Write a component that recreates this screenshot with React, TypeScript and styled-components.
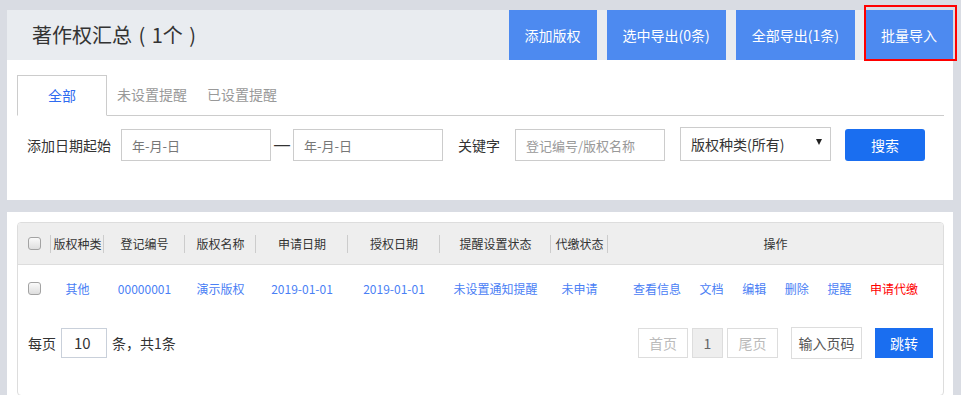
import React from "react";
import styled, { createGlobalStyle } from "styled-components";

const GlobalStyle = createGlobalStyle`
  html, body {
    margin: 0;
    padding: 0;
    background: #d9dce3;
    font-family: "Noto Sans CJK SC", "Noto Sans", sans-serif;
    color: #333;
  }
  * { box-sizing: border-box; }
`;

const Page = styled.div`
  padding: 10px 8px 0 7px;
`;

const TopPanel = styled.section`
  background: #fff;
  padding-bottom: 39px;
`;

const Header = styled.header`
  display: flex;
  align-items: stretch;
  height: 50px;
  background: #e9ecf0;
`;

const Title = styled.h1`
  margin: 0;
  padding-left: 25px;
  font-size: 20px;
  font-weight: normal;
  line-height: 50px;
  word-spacing: 2px;
  color: #333;
`;

const ActionBar = styled.div`
  margin-left: auto;
  display: flex;
  gap: 10px;
`;

const ActionButton = styled.button<{ $highlighted?: boolean }>`
  position: relative;
  height: 50px;
  padding: 0 16px;
  border: none;
  background: #4d8af0;
  color: #fff;
  font-family: inherit;
  font-size: 14px;
  cursor: pointer;
  ${(p) =>
    p.$highlighted &&
    `
    &::after {
      content: "";
      position: absolute;
      top: -5px;
      left: -1px;
      right: -4px;
      bottom: -1px;
      border: 2px solid #f00;
      pointer-events: none;
    }
  `}
`;

const Body = styled.div`
  padding: 15px 9px 0 10px;
`;

const TabBar = styled.div`
  display: flex;
  height: 41px;
  border-bottom: 1px solid #ccc;
`;

const Tab = styled.div<{ $active?: boolean }>`
  height: 41px;
  line-height: 39px;
  font-size: 14px;
  text-align: center;
  ${(p) =>
    p.$active
      ? `
    width: 90px;
    border: 1px solid #ccc;
    border-bottom-color: #fff;
    background: #fff;
    color: #2f6bf0;
  `
      : `
    padding: 0 10px;
    color: #999;
  `}
`;

const FilterRow = styled.div`
  display: flex;
  align-items: center;
  margin-top: 13px;
  padding-left: 10px;
`;

const Label = styled.span<{ $gapLeft?: number }>`
  font-size: 14px;
  color: #333;
  margin-left: ${(p) => p.$gapLeft ?? 0}px;
  margin-right: ${(p) => (p.$gapLeft ? 15 : 10)}px;
`;

const TextInput = styled.input`
  width: 150px;
  height: 32px;
  border: 1px solid #ccc;
  padding: 0 10px;
  font-family: inherit;
  font-size: 13px;
  color: #666;
  outline: none;
  &::placeholder { color: #777; }
`;

const KeywordInput = styled(TextInput)`
  &::placeholder { color: #999; }
`;

const Dash = styled.span`
  margin: 0 3px;
  font-family: "Liberation Sans", sans-serif;
  font-size: 16px;
  color: #333;
`;

const SelectBox = styled.div`
  display: flex;
  align-items: center;
  justify-content: space-between;
  width: 151px;
  height: 34px;
  margin-left: 15px;
  margin-top: -3px;
  padding: 0 8px 0 10px;
  border: 1px solid #ccc;
  font-size: 14px;
  color: #333;
`;

const Caret = styled.span`
  width: 0;
  height: 0;
  border-left: 3.5px solid transparent;
  border-right: 3.5px solid transparent;
  border-top: 6px solid #222;
  margin-top: -4px;
`;

const SearchButton = styled.button`
  width: 80px;
  height: 32px;
  margin-left: 14px;
  border: none;
  border-radius: 3px;
  background: #1a6ef0;
  color: #fff;
  font-family: inherit;
  font-size: 14px;
`;

const BottomPanel = styled.section`
  margin-top: 12px;
  background: #fff;
  padding: 10px 9px 10px 10px;
`;

const TableBox = styled.div`
  border: 1px solid #ddd;
  border-radius: 4px;
  overflow: hidden;
`;

const columns = "33px 53px 81px 71px 92px 92px 111px 57px 1fr";

const HeadRow = styled.div`
  display: grid;
  grid-template-columns: ${columns};
  align-items: center;
  height: 42px;
  background: #eee;
  border-bottom: 1px solid #ddd;
`;

const HeadCell = styled.div<{ $sep?: boolean }>`
  position: relative;
  display: flex;
  align-items: center;
  justify-content: center;
  font-size: 12px;
  color: #333;
  white-space: nowrap;
  ${(p) =>
    p.$sep &&
    `
    &::after {
      content: "";
      position: absolute;
      right: 0;
      top: 50%;
      width: 1px;
      height: 18px;
      margin-top: -9px;
      background: #ccc;
    }
  `}
`;

const DataRow = styled.div`
  display: grid;
  grid-template-columns: ${columns};
  align-items: center;
  height: 46px;
`;

const Cell = styled.div<{ $color?: string }>`
  display: flex;
  align-items: center;
  justify-content: center;
  font-size: 12px;
  white-space: nowrap;
  color: ${(p) => p.$color ?? "#4a80f5"};
`;

const Ops = styled.div`
  display: flex;
  justify-content: center;
  gap: 18.6px;
  font-size: 12px;
  white-space: nowrap;
`;

const OpLink = styled.a<{ $danger?: boolean }>`
  color: ${(p) => (p.$danger ? "#f00" : "#4a80f5")};
  text-decoration: none;
  cursor: pointer;
`;

const Check = styled.span`
  display: inline-block;
  width: 13px;
  height: 13px;
  border: 1px solid #a3a3a3;
  border-radius: 3px;
  background: linear-gradient(#fafafa, #dedede);
`;

const Pager = styled.div`
  display: flex;
  align-items: center;
  padding: 16px 10px 36px 10px;
  font-size: 14px;
  color: #333;
`;

const SizeInput = styled.div`
  width: 46px;
  height: 30px;
  margin: 0 5px;
  padding-left: 12px;
  border: 1px solid #c9d0da;
  line-height: 28px;
  font-size: 15px;
  color: #333;
`;

const PageButtons = styled.div`
  margin-left: auto;
  display: flex;
  align-items: center;
  gap: 4px;
`;

const PageBox = styled.div<{ $current?: boolean; $width: number }>`
  width: ${(p) => p.$width}px;
  height: 30px;
  line-height: 28px;
  text-align: center;
  border: 1px solid #ddd;
  background: ${(p) => (p.$current ? "#eee" : "#fff")};
  color: ${(p) => (p.$current ? "#666" : "#bbb")};
  font-size: 14px;
`;

const PageInput = styled.div`
  width: 71px;
  height: 32px;
  margin-left: 9px;
  line-height: 30px;
  text-align: center;
  border: 1px solid #ddd;
  color: #555;
  font-size: 14px;
`;

const JumpButton = styled.button`
  width: 58px;
  height: 30px;
  margin-left: 9px;
  border: none;
  background: #1a6ef0;
  color: #fff;
  font-family: inherit;
  font-size: 14px;
`;

const headers = ["版权种类", "登记编号", "版权名称", "申请日期", "授权日期", "提醒设置状态", "代缴状态"];
const row = ["其他", "00000001", "演示版权", "2019-01-01", "2019-01-01", "未设置通知提醒", "未申请"];
const ops = ["查看信息", "文档", "编辑", "删除", "提醒"];

export default function App() {
  return (
    <>
      <GlobalStyle />
      <Page>
        <TopPanel>
          <Header>
            <Title>著作权汇总 ( 1个 )</Title>
            <ActionBar>
              <ActionButton>添加版权</ActionButton>
              <ActionButton>选中导出(0条)</ActionButton>
              <ActionButton>全部导出(1条)</ActionButton>
              <ActionButton $highlighted>批量导入</ActionButton>
            </ActionBar>
          </Header>
          <Body>
            <TabBar>
              <Tab $active>全部</Tab>
              <Tab>未设置提醒</Tab>
              <Tab>已设置提醒</Tab>
            </TabBar>
            <FilterRow>
              <Label>添加日期起始</Label>
              <TextInput placeholder="年-月-日" />
              <Dash>—</Dash>
              <TextInput placeholder="年-月-日" />
              <Label $gapLeft={15}>关键字</Label>
              <KeywordInput placeholder="登记编号/版权名称" />
              <SelectBox>
                <span>版权种类(所有)</span>
                <Caret />
              </SelectBox>
              <SearchButton>搜索</SearchButton>
            </FilterRow>
          </Body>
        </TopPanel>
        <BottomPanel>
          <TableBox>
            <HeadRow>
              <HeadCell $sep>
                <Check />
              </HeadCell>
              {headers.map((h) => (
                <HeadCell key={h} $sep>
                  {h}
                </HeadCell>
              ))}
              <HeadCell>操作</HeadCell>
            </HeadRow>
            <DataRow>
              <Cell>
                <Check />
              </Cell>
              {row.map((v, i) => (
                <Cell key={i}>{v}</Cell>
              ))}
              <Ops>
                {ops.map((o) => (
                  <OpLink key={o}>{o}</OpLink>
                ))}
                <OpLink $danger>申请代缴</OpLink>
              </Ops>
            </DataRow>
            <Pager>
              <span>每页</span>
              <SizeInput>10</SizeInput>
              <span>条，共1条</span>
              <PageButtons>
                <PageBox $width={50}>首页</PageBox>
                <PageBox $width={31} $current>
                  1
                </PageBox>
                <PageBox $width={51}>尾页</PageBox>
                <PageInput>输入页码</PageInput>
                <JumpButton>跳转</JumpButton>
              </PageButtons>
            </Pager>
          </TableBox>
        </BottomPanel>
      </Page>
    </>
  );
}
